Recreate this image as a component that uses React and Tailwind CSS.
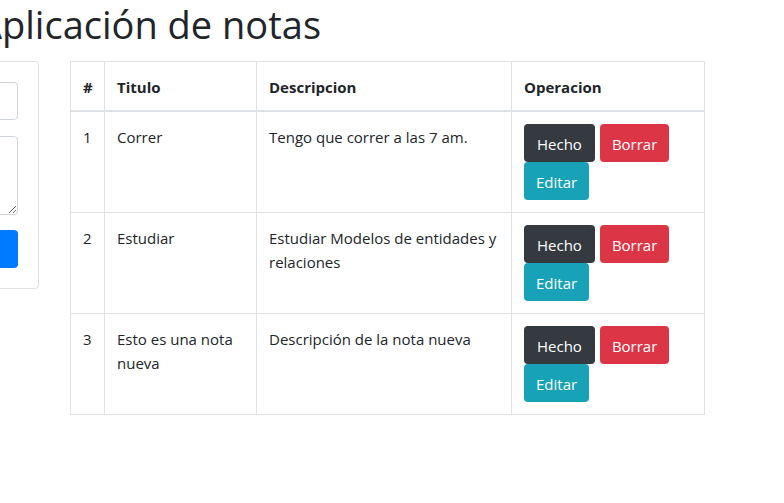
import React from 'react';

const notes = [
    { id: 1, title: 'Correr', description: 'Tengo que correr a las 7 am.' },
    { id: 2, title: 'Estudiar', description: 'Estudiar Modelos de entidades y relaciones' },
    { id: 3, title: 'Esto es una nota nueva', description: 'Descripción de la nota nueva' },
];

const App = () => {
    return (
        <div className="min-h-screen bg-white text-[#212529] overflow-hidden" style={{ fontFamily: '"Open Sans", "Noto Sans", sans-serif' }}>
            <h1 className="-ml-[22px] text-[38px] leading-[48px] font-normal whitespace-nowrap">Aplicación de notas</h1>

            <div className="flex items-start mt-[13px]">
                {/* form card, mostly off screen */}
                <div className="-ml-[211px] w-[250px] shrink-0 border border-[#dfdfdf] rounded-[4px] p-5">
                    <input className="block w-full h-[38px] border border-[#ced4da] rounded-[4px] mb-4 px-3" />
                    <textarea className="block w-full h-[79px] border border-[#ced4da] rounded-[4px] mb-[15px] px-3" />
                    <button className="block w-full h-[38px] bg-[#007bff] rounded-[4px] text-white">Guardar</button>
                </div>

                <div className="ml-[31px] w-[634px] shrink-0">
                    <table className="w-full table-fixed border-collapse text-[16px] leading-6">
                        <thead>
                            <tr className="text-left">
                                <th className="w-[34px] border border-[#dee2e6] border-b-2 px-3 pt-[13px] pb-[11px] font-bold text-[15px]">#</th>
                                <th className="w-[152px] border border-[#dee2e6] border-b-2 px-3 pt-[13px] pb-[11px] font-bold text-[15px]">Titulo</th>
                                <th className="w-[255px] border border-[#dee2e6] border-b-2 px-3 pt-[13px] pb-[11px] font-bold text-[15px]">Descripcion</th>
                                <th className="w-[193px] border border-[#dee2e6] border-b-2 px-3 pt-[13px] pb-[11px] font-bold text-[15px]">Operacion</th>
                            </tr>
                        </thead>
                        <tbody>
                            {notes.map((note) => (
                                <tr key={note.id} className="align-top">
                                    <td className="border border-[#dee2e6] px-3 pt-[13px] pb-3 text-[15px]">{note.id}</td>
                                    <td className="border border-[#dee2e6] px-3 pt-[13px] pb-3 text-[15px]">{note.title}</td>
                                    <td className="border border-[#dee2e6] px-3 pt-[13px] pb-3 text-[15px]">{note.description}</td>
                                    <td className="border border-[#dee2e6] px-3 py-3">
                                        <div className="flex flex-wrap w-[150px]">
                                            <button className="h-[38px] px-[13px] pt-px bg-[#343a40] text-white rounded-[4px] text-[15px] mr-[5px]">Hecho</button>
                                            <button className="h-[38px] px-3 pt-px bg-[#dc3545] text-white rounded-[4px] text-[15px]">Borrar</button>
                                            <button className="h-[38px] px-[12px] pt-px bg-[#17a2b8] text-white rounded-[4px] text-[15px]">Editar</button>
                                        </div>
                                    </td>
                                </tr>
                            ))}
                        </tbody>
                    </table>
                </div>
            </div>
        </div>
    );
};

export default App;
